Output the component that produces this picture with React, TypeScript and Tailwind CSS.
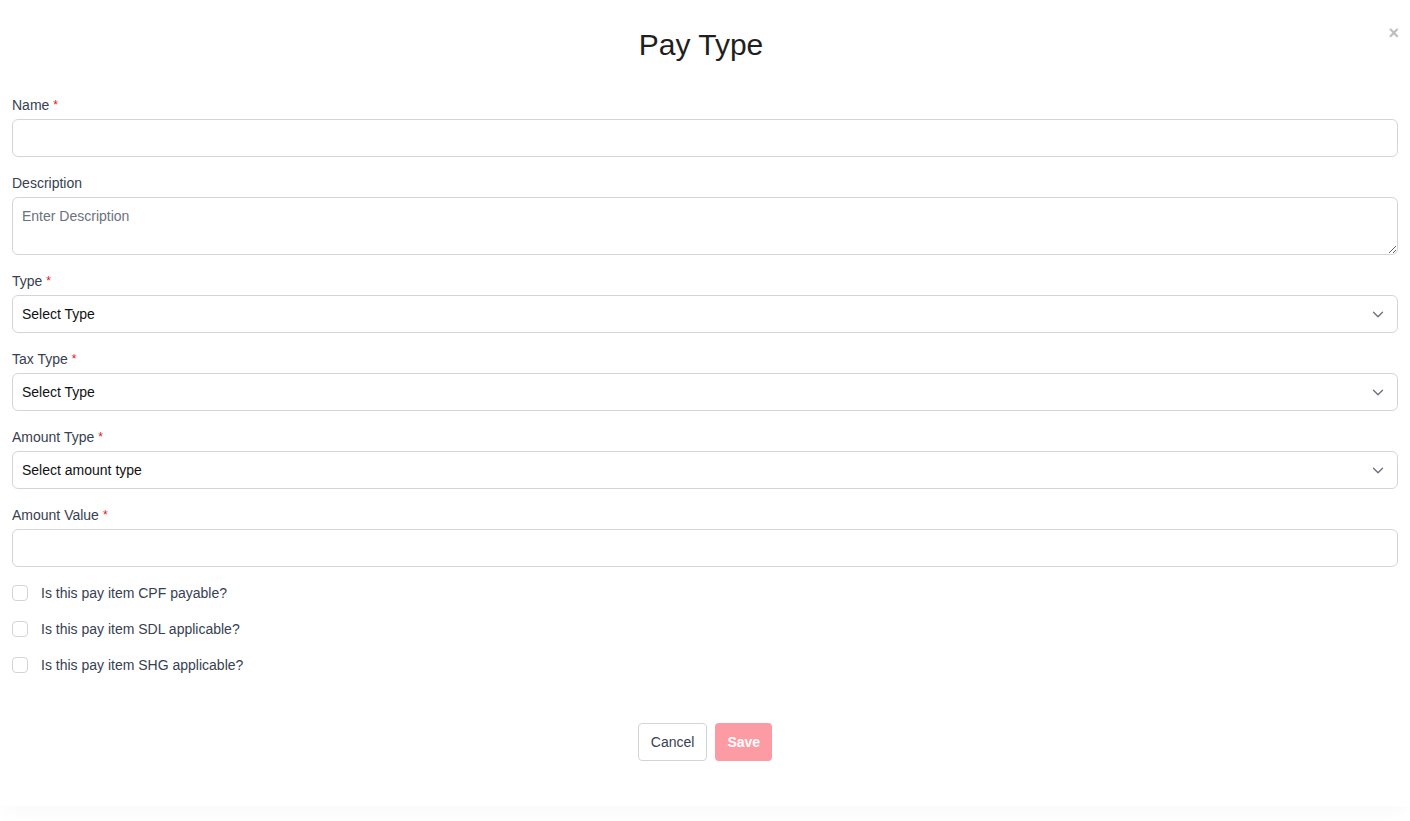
import React from "react";

const Label = ({ text, required }: { text: string; required?: boolean }) => (
  <label className="block h-5 text-[14px] leading-5 text-[#374151] mb-1">
    {text}
    {required && <span className="text-[#ef1010] ml-1 text-[12px] align-top">*</span>}
  </label>
);

const Chevron = () => (
  <svg width="18" height="18" viewBox="0 0 20 20" fill="none" className="text-[#6b7280]">
    <path d="M5 8l5 5 5-5" stroke="currentColor" strokeWidth="1.5" strokeLinecap="round" strokeLinejoin="round" />
  </svg>
);

const Select = ({ text }: { text: string }) => (
  <div className="h-[38px] w-full rounded-md border border-[#d1d5db] flex items-center justify-between pl-[9px] pr-[10px] text-[14px] text-[#111]">
    <span>{text}</span>
    <Chevron />
  </div>
);

const Check = ({ text }: { text: string }) => (
  <div className="flex items-center h-9">
    <div className="w-4 h-4 rounded-[4px] border border-[#d1d5db] bg-white" />
    <span className="ml-[13px] text-[14px] text-[#374151]">{text}</span>
  </div>
);

export default function App() {
  return (
    <div className="w-[1410px] h-[821px] bg-white overflow-hidden" style={{ fontFamily: '"Liberation Sans", Arial, sans-serif' }}>
      <div className="relative h-[806px] bg-white px-3 shadow-[0_12px_24px_-6px_rgba(0,0,0,0.03)]">
        <div className="absolute right-[11px] top-[24px] text-[#bdbdbd] text-[18px] leading-none font-bold">×</div>
        <h1 className="text-center text-[30px] leading-8 text-[#1f1f1f] pt-[29px] pb-[34px] pr-2">Pay Type</h1>
        <div className="flex flex-col gap-4">
          <div>
            <Label text="Name" required />
            <input className="block h-[38px] w-full rounded-md border border-[#d1d5db] outline-none px-2.5" />
          </div>
          <div>
            <Label text="Description" />
            <textarea
              placeholder="Enter Description"
              className="block h-[58px] w-full rounded-md border border-[#d1d5db] outline-none px-[9px] py-[8px] text-[14px] placeholder:text-[#6b7280]"
            />
          </div>
          <div>
            <Label text="Type" required />
            <Select text="Select Type" />
          </div>
          <div>
            <Label text="Tax Type" required />
            <Select text="Select Type" />
          </div>
          <div>
            <Label text="Amount Type" required />
            <Select text="Select amount type" />
          </div>
          <div>
            <Label text="Amount Value" required />
            <input className="block h-[38px] w-full rounded-md border border-[#d1d5db] outline-none px-2.5" />
          </div>
        </div>
        <div className="mt-2 flex flex-col">
          <Check text="Is this pay item CPF payable?" />
          <Check text="Is this pay item SDL applicable?" />
          <Check text="Is this pay item SHG applicable?" />
        </div>
        <div className="flex justify-center gap-2 mt-[40px]">
          <button className="h-[38px] px-3 rounded-[4px] border border-[#d1d5db] bg-white text-[14px] text-[#374151]">Cancel</button>
          <button className="h-[38px] px-3 rounded-[4px] bg-[#fd9ba4] text-[14px] text-white font-bold">Save</button>
        </div>
      </div>
    </div>
  );
}
